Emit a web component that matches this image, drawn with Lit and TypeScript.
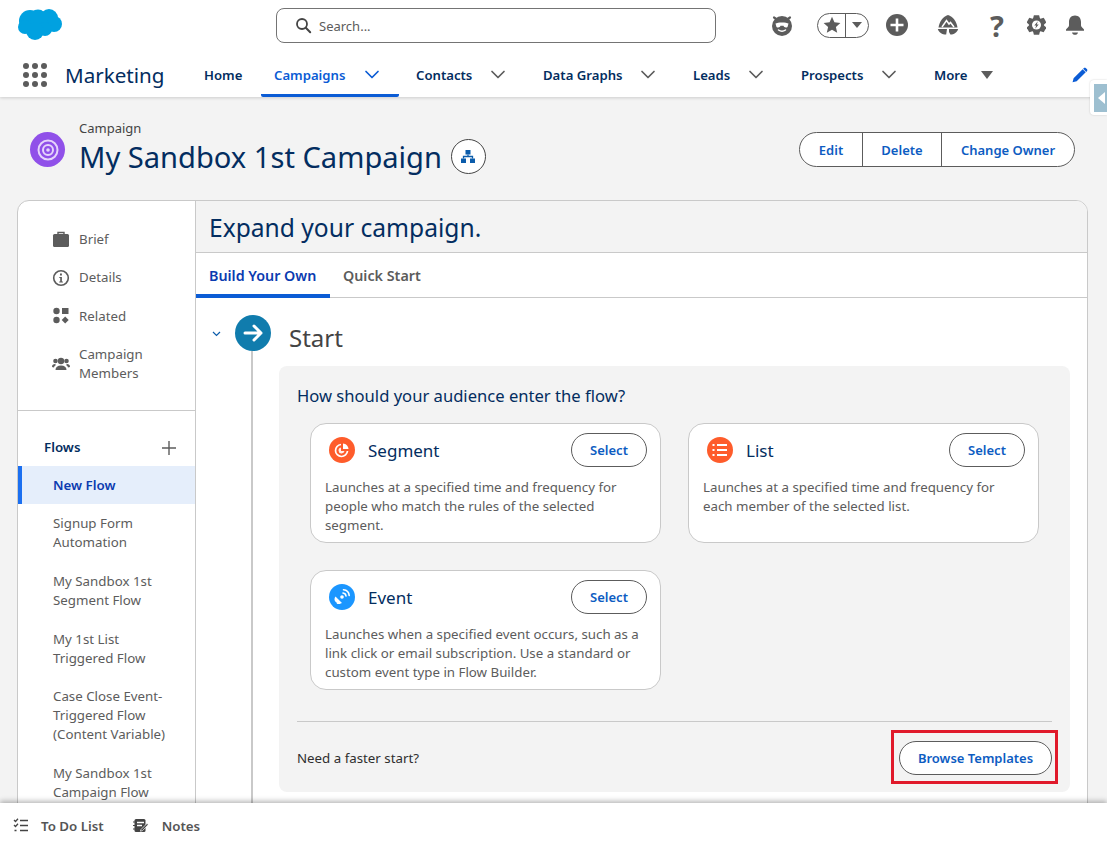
import { LitElement, html, css, svg } from "lit";
import { customElement } from "lit/decorators.js";

const chevron = (color: string) => html`<svg class="chev" width="16" height="10" viewBox="0 0 16 10"><path d="M2 1.500l6 6 6-6" fill="none" stroke=${color} stroke-width="1.700" stroke-linecap="round" stroke-linejoin="round"/></svg>`;

const icons = {
  cloud: svg`<g fill="#00a1e0"><circle cx="30" cy="21" r="11"/><circle cx="38" cy="18" r="8.500"/><circle cx="49" cy="18" r="9"/><circle cx="54" cy="24" r="8"/><circle cx="45" cy="29" r="7"/><circle cx="35" cy="31" r="9"/><circle cx="25" cy="27" r="7"/></g>`,
  search: svg`<circle cx="7" cy="7" r="5" fill="none" stroke="#444" stroke-width="1.800"/><path d="M10.800 10.800l4.400 4.400" stroke="#444" stroke-width="2" stroke-linecap="round"/>`,
  einstein: svg`<circle cx="11" cy="12" r="10" fill="#5c5c5c"/><path d="M3 3.500l3 2M19 3.500l-3 2" stroke="#5c5c5c" stroke-width="2.200" stroke-linecap="round"/><path d="M4.500 9.500c2-1.500 11-1.500 13 0l-1 3.500c-1.500 1-3.500.5-4-1.200h-3c-.5 1.700-2.500 2.200-4 1.200z" fill="#fff"/><path d="M7.500 16c2 1.500 5 1.500 7 0" stroke="#fff" stroke-width="1.500" fill="none" stroke-linecap="round"/>`,
  star: svg`<path d="M9 .8l2.400 5.500 6 .6-4.500 4 1.300 5.900L9 13.700 3.800 16.800l1.300-5.900-4.500-4 6-.6z" fill="#5c5c5c"/>`,
  plus: svg`<circle cx="11" cy="11" r="11" fill="#5c5c5c"/><path d="M11 4.500v13M4.500 11h13" stroke="#fff" stroke-width="2.600"/>`,
  trail: svg`<path d="M11 0c5 1.500 8.500 6.500 9.500 12.500h-19C2.500 6.500 6 1.500 11 0z" fill="#5c5c5c"/><path d="M.8 14h9.200l-.8 5.500C5 19.500 1.800 17.500.8 14zM12 14h9.200c-1 3.500-4.200 5.500-7.800 5.500l-1.400-2.500z" fill="#5c5c5c"/><path d="M5 12l4.500-6.500L12 9l1.500-1.500L17 12" fill="none" stroke="#fff" stroke-width="1.500"/>`,
  gear: svg`<g fill="#5c5c5c" transform="translate(9.500 10)"><circle r="7.400"/>${[0, 60, 120, 180, 240, 300].map(
    (a) => svg`<path d="M-2.600-9.800h5.200l1 4h-7.200z" transform="rotate(${a})"/>`
  )}<circle r="4.500" fill="#fff"/><path d="M1.300-3.800L-2.200.6h1.900L-1.300 3.800 2.200-.6H.3z"/></g>`,
  bell: svg`<path d="M10 1.500c3.800 0 6 2.800 6 6.500v3.500c0 1.500 2 2.500 3 4v1.200H1v-1.200c1-1.500 3-2.500 3-4V8c0-3.700 2.200-6.500 6-6.500z" fill="#5c5c5c"/><path d="M7 18.500h6c-.3 1.500-1.500 2.300-3 2.300s-2.700-.8-3-2.300z" fill="#5c5c5c"/>`,
  pencil: svg`<path d="M11.300 2.300l3.300 3.300L5 15.200.6 16.300 1.700 12zM12.400 1.200c.7-.7 1.700-.7 2.400 0l1 1c.7.7.7 1.700 0 2.400l-.6.600-3.400-3.400z" fill="#0b5cd5"/>`,
  org: svg`<rect x="4.500" y="0" width="5" height="4.500" fill="#0b5cab"/><rect x="0" y="8.500" width="5" height="4.500" fill="#0b5cab"/><rect x="9" y="8.500" width="5" height="4.500" fill="#0b5cab"/><path d="M7 4.500v2M2.500 8.500v-2h9v2" fill="none" stroke="#0b5cab" stroke-width="1.300"/>`,
  brief: svg`<path d="M6 3V1.500h6V3" fill="none" stroke="#5c5c5c" stroke-width="1.400"/><rect x="1" y="3" width="16" height="13" rx="1.500" fill="#5c5c5c"/>`,
  info: svg`<circle cx="9" cy="9" r="7.300" fill="none" stroke="#5c5c5c" stroke-width="1.600"/><path d="M7.300 8h2.600v4.500h1v1H7.200v-1h1V9h-.9zM8 4.500h1.900v2H8z" fill="#5c5c5c"/>`,
  related: svg`<circle cx="4.500" cy="4" r="3.200" fill="#5c5c5c"/><rect x="10" y="1" width="6.500" height="6" fill="#5c5c5c"/><circle cx="4.500" cy="13" r="3.200" fill="#5c5c5c"/><path d="M13.200 9.500l3.500 3.500-3.500 3.500-3.500-3.500z" fill="#5c5c5c"/>`,
  members: svg`<g fill="#5c5c5c"><circle cx="9" cy="6" r="3.200"/><path d="M3.500 15c0-3 2-4.500 5.500-4.500s5.500 1.500 5.500 4.500z"/><circle cx="3.500" cy="6" r="2.300"/><circle cx="14.500" cy="6" r="2.300"/><path d="M0 12c0-2.200 1.200-3 3-3l1 1c-1 .6-1.800 1.500-2 2.500zM18 12c0-2.200-1.200-3-3-3l-1 1c1 .6 1.800 1.500 2 2.500z"/></g>`,
  arrow: svg`<path d="M4 12h16M13 5l7 7-7 7" fill="none" stroke="#fff" stroke-width="3" stroke-linecap="round" stroke-linejoin="round"/>`,
  segment: svg`<circle cx="13" cy="13" r="13" fill="#fe5c2b"/><path d="M14 6.500c3 .2 5.300 2.500 5.500 5.500H14z" fill="#fff"/><path d="M12 7.500a6 6 0 1 0 6.500 6.500" fill="none" stroke="#fff" stroke-width="1.700"/><path d="M12 10.500a3 3 0 1 0 3.500 3.500H12z" fill="#fff" opacity=".9"/>`,
  list: svg`<circle cx="13" cy="13" r="13" fill="#fe5c2b"/><path d="M10 8h10M10 13h10M10 18h10" stroke="#fff" stroke-width="2"/><path d="M5.500 8h2M5.500 13h2M5.500 18h2" stroke="#fff" stroke-width="2"/>`,
  event: svg`<circle cx="13" cy="13" r="13" fill="#1b96ff"/><path d="M6.500 12.500l6.500 6.500c-2.500 1-5 .5-6.500-1.200s-1.200-3.500 0-5.300z" fill="#fff"/><path d="M10 17l-2.500 3h4z" fill="#fff"/><circle cx="13" cy="13" r="1.800" fill="#fff"/><path d="M14 9c1.700.2 2.800 1.300 3 3M14.500 5.800c3.200.3 5.400 2.500 5.700 5.700" fill="none" stroke="#fff" stroke-width="1.600" stroke-linecap="round"/>`,
  todo: svg`<path d="M1 2l1.500 1.500L5 .8M1 7l1.500 1.500L5 5.800" fill="none" stroke="#444" stroke-width="1.300"/><path d="M7 2.500h8M7 7.500h8M7 12.500h8M1.500 12.500h2" stroke="#444" stroke-width="1.600"/>`,
  notes: svg`<rect x="1.500" y="1" width="11" height="13" rx="1.500" fill="#444"/><path d="M0 4h3M0 7.500h3M0 11h3" stroke="#444" stroke-width="1.200"/><path d="M4 4.500h7M4 7.500h5" stroke="#fff" stroke-width="1.300"/><path d="M8 11.500l6-6 1.200 1.200-5.800 6-2 .5z" fill="#444" stroke="#fff" stroke-width=".7"/>`,
};

const navItems = [
  { label: "Contacts", width: 127 },
  { label: "Data Graphs", width: 150 },
  { label: "Leads", width: 108 },
  { label: "Prospects", width: 133 },
];

const flows = [
  ["Signup Form", "Automation"],
  ["My Sandbox 1st", "Segment Flow"],
  ["My 1st List", "Triggered Flow"],
  ["Case Close Event-", "Triggered Flow", "(Content Variable)"],
  ["My Sandbox 1st", "Campaign Flow"],
];

const entries = [
  { icon: icons.segment, title: "Segment", text: "Launches at a specified time and frequency for people who match the rules of the selected segment." },
  { icon: icons.list, title: "List", text: "Launches at a specified time and frequency for each member of the selected list." },
  { icon: icons.event, title: "Event", text: "Launches when a specified event occurs, such as a link click or email subscription. Use a standard or custom event type in Flow Builder." },
];

@customElement("app-root")
export class AppRoot extends LitElement {
  static styles = css`
    :host {
      display: flex;
      flex-direction: column;
      height: 100vh;
      overflow: hidden;
      position: relative;
      background: #f3f3f3;
      color: #032d60;
      font-family: "Noto Sans", "Open Sans", sans-serif;
      font-size: 13.3px;
    }

    svg { display: block; flex: none; }

    /* header */
    .header {
      flex: none;
      height: 97px;
      background: #fff;
      box-shadow: 0 1px 3px rgba(0, 0, 0, 0.16);
      position: relative;
      z-index: 2;
    }
    .top {
      display: flex;
      align-items: center;
      height: 52px;
      padding-left: 18px;
    }
    .logo { margin-right: 214px; margin-top: -2px; }
    .search {
      box-sizing: border-box;
      width: 440px;
      height: 35px;
      border: 1px solid #747474;
      border-radius: 8px;
      display: flex;
      align-items: center;
      gap: 7px;
      padding-left: 18px;
      color: #5c5c5c;
      font-size: 13px;
      margin-right: 55px;
      margin-top: -1px;
    }
    .tools { display: flex; align-items: center; margin-top: -2px; }
    .pill {
      width: 52px;
      height: 25px;
      border: 1px solid #5c5c5c;
      border-radius: 13px;
      display: flex;
      align-items: center;
      margin: 0 17px 0 24px;
      box-sizing: border-box;
    }
    .pill .star { width: 28px; display: flex; justify-content: center; border-right: 1px solid #5c5c5c; height: 100%; align-items: center; box-sizing: border-box; padding-left: 1px; }
    .pill .caret { margin-left: 6px; }
    .caret {
      width: 0;
      height: 0;
      border-left: 5px solid transparent;
      border-right: 5px solid transparent;
      border-top: 6px solid #5c5c5c;
    }
    .trail { margin-left: 29px; }
    .help {
      width: 14px;
      margin: 0 23px 0 31px;
      font-size: 29px;
      font-weight: 700;
      line-height: 1;
      color: #5c5c5c;
      text-align: center;
    }
    .bell { margin-left: 19px; }

    .nav {
      display: flex;
      align-items: center;
      height: 45px;
      padding-left: 23px;
      font-weight: 600;
      font-size: 13.15px;
    }
    .waffle {
      display: grid;
      grid-template-columns: repeat(3, 6px);
      gap: 3px;
      margin-right: 18px;
    }
    .waffle i { width: 6px; height: 6px; border-radius: 50%; background: #5c5c5c; }
    .app { font-size: 20.6px; font-weight: 400; width: 139px; }
    .nav-item { display: flex; align-items: center; height: 100%; box-sizing: border-box; }
    .home { width: 57px; }
    .active {
      width: 138px;
      margin-right: 17px;
      padding-left: 13px;
      color: #0b5cd5;
      border-bottom: 3px solid #0b5cd5;
      border-radius: 0 0 2px 2px;
      padding-top: 3px;
    }
    .active .chev { margin-left: 19px; }
    .item .chev { margin-left: auto; margin-right: 37px; }
    .more { width: 138px; gap: 14px; }
    .more .caret { border-left-width: 6px; border-right-width: 6px; border-top-width: 8px; }

    .handle {
      position: absolute;
      top: 80px;
      right: 0;
      width: 17px;
      height: 35px;
      background: #fff;
      border-radius: 4px 0 0 4px;
      box-shadow: 0 0 2px rgba(0, 0, 0, 0.2);
      z-index: 3;
      display: flex;
      align-items: center;
      justify-content: flex-end;
    }
    .handle div {
      width: 13px;
      height: 28px;
      background: #9dbfd0;
      display: flex;
      align-items: center;
    }
    .handle i {
      width: 0;
      height: 0;
      border-top: 6px solid transparent;
      border-bottom: 6px solid transparent;
      border-right: 7px solid #fff;
      margin-left: 4px;
    }

    /* page body */
    .content { flex: 1; min-height: 0; overflow: hidden; }
    .title-row {
      height: 103px;
      display: flex;
      padding: 0 32px 0 30px;
      box-sizing: border-box;
      position: relative;
    }
    .badge {
      width: 35px;
      height: 35px;
      border-radius: 50%;
      background: #9050e9;
      display: flex;
      align-items: center;
      justify-content: center;
      margin-top: 35px;
      margin-right: 14px;
    }
    .heading { margin-top: 23px; }
    .eyebrow { font-size: 13px; line-height: 17.8px; color: #444; }
    .name { font-size: 29.1px; line-height: 39.8px; white-space: nowrap; }
    .org {
      width: 35px;
      height: 35px;
      border: 1px solid #444;
      border-radius: 50%;
      background: #fff;
      box-sizing: border-box;
      display: flex;
      align-items: center;
      justify-content: center;
      margin: 42px 0 0 9px;
    }
    .group {
      margin-left: auto;
      margin-top: 35px;
      height: 35px;
      display: flex;
      border: 1px solid #5c5c5c;
      border-radius: 18px;
      background: #fff;
      box-sizing: border-box;
      color: #0d5cc2;
      font-weight: 600;
      font-size: 13px;
      align-items: center;
      text-align: center;
    }
    .group span { line-height: 35px; height: 33px; border-left: 1px solid #5c5c5c; box-sizing: border-box; }
    .group span:first-child { border-left: 0; }
    .edit { width: 62px; }
    .delete { width: 79px; }
    .owner { width: 133px; }

    .card {
      margin: 0 19px 0 17px;
      height: 660px;
      background: #fff;
      border: 1px solid #c9c9c9;
      border-radius: 12px 12px 0 0;
      display: flex;
      overflow: hidden;
    }
    .side { width: 177px; flex: none; border-right: 1px solid #c9c9c9; color: #5c5c5c; line-height: 19px; }
    .side-top { height: 210px; padding-top: 29px; box-sizing: border-box; border-bottom: 1px solid #c9c9c9; }
    .side-link { display: flex; align-items: center; padding-left: 34px; gap: 9px; margin-bottom: 19.3px; }
    .side-link svg { width: 18px; height: 18px; }
    .flows-head {
      display: flex;
      justify-content: space-between;
      align-items: center;
      height: 55px;
      padding: 18px 19px 0 26px;
      box-sizing: border-box;
      font-weight: 600;
      color: #032d60;
    }
    .flow-new {
      height: 38px;
      line-height: 38px;
      background: #e5eefb;
      border-left: 4px solid #1b6ff0;
      padding-left: 31px;
      color: #0b3bb0;
      font-weight: 600;
      margin-bottom: 10px;
    }
    .flow { padding-left: 35px; margin-bottom: 19.75px; }

    .main { flex: 1; min-width: 0; display: flex; flex-direction: column; }
    .main-head {
      height: 52px;
      flex: none;
      background: #f3f3f3;
      border-bottom: 1px solid #c9c9c9;
      padding-left: 13px;
      font-size: 24.6px;
      line-height: 54px;
      box-sizing: border-box;
    }
    .tabs {
      height: 45px;
      box-sizing: border-box;
      flex: none;
      border-bottom: 1px solid #c9c9c9;
      display: flex;
      font-size: 14.3px;
      font-weight: 600;
      color: #5c5c5c;
    }
    .tab { display: flex; align-items: center; padding: 0 13px; height: 45px; box-sizing: border-box; }
    .tab.on { color: #0b3bb0; border-bottom: 4px solid #0b5cd5; padding-top: 4px; width: 134px; }

    .step { display: flex; padding: 17px 17px 0 16px; flex: 1; }
    .toggle { width: 23px; padding-top: 16px; flex: none; }
    .rail { width: 44px; flex: none; display: flex; flex-direction: column; }
    .circle {
      width: 36px;
      height: 36px;
      border-radius: 50%;
      background: #107cad;
      display: flex;
      align-items: center;
      justify-content: center;
    }
    .line { flex: 1; width: 2px; background: #c9c9c9; margin-left: 16px; }
    .body { flex: 1; min-width: 0; padding-bottom: 40px; }
    .start { font-size: 24px; line-height: 34px; margin: 6px 0 11px 10px; color: #444; }
    .panel {
      background: #f3f3f3;
      border-radius: 8px;
      padding: 18px 18px 1px;
    }
    .ask { font-size: 16.6px; line-height: 24px; margin-bottom: 15px; }
    .grid {
      display: grid;
      grid-template-columns: 351px 351px;
      gap: 27px;
      padding-left: 13px;
    }
    .entry {
      height: 120px;
      background: #fff;
      border: 1px solid #c9c9c9;
      border-radius: 16px;
      box-sizing: border-box;
      padding: 9px 13px 0 14px;
    }
    .entry-head { display: flex; align-items: center; height: 34px; padding-left: 4px; margin-bottom: 11px; }
    .entry-title { font-size: 17px; margin-left: 13px; }
    .select {
      margin-left: auto;
      width: 76px;
      height: 34px;
      box-sizing: border-box;
      border: 1px solid #5c5c5c;
      border-radius: 17px;
      text-align: center;
      line-height: 33px;
      color: #0d5cc2;
      font-weight: 600;
      font-size: 13px;
    }
    .entry p { margin: 0; line-height: 19px; color: #5c5c5c; }
    .more-row {
      margin-top: 31px;
      border-top: 1px solid #c9c9c9;
      height: 70px;
      display: flex;
      align-items: center;
      justify-content: space-between;
      padding-top: 3px;
      box-sizing: border-box;
      color: #2e2e2e;
      position: relative;
    }
    .browse {
      width: 153px;
      height: 34px;
      box-sizing: border-box;
      border: 1px solid #5c5c5c;
      border-radius: 17px;
      background: #fff;
      text-align: center;
      line-height: 32px;
      color: #0d5cc2;
      font-weight: 600;
      font-size: 13px;
    }
    .mark {
      position: absolute;
      right: -6px;
      top: 8px;
      width: 167px;
      height: 54px;
      box-sizing: border-box;
      border: 3px solid #e01a2b;
    }

    .footer {
      flex: none;
      height: 41px;
      background: #fff;
      box-shadow: 0 -2px 5px rgba(0, 0, 0, 0.28);
      position: relative;
      z-index: 2;
      display: flex;
      align-items: center;
      padding: 4px 0 0 13px;
      box-sizing: border-box;
      color: #555;
      font-weight: 600;
    }
    .foot-item { display: flex; align-items: center; gap: 12px; margin-right: 29px; }
    .foot-item + .foot-item { gap: 13px; }
  `;

  render() {
    return html`
      <div class="header">
        <div class="top">
          <svg class="logo" width="44" height="32" viewBox="18 9.500 44 31">${icons.cloud}</svg>
          <div class="search">
            <svg width="17" height="17" viewBox="0 0 17 17">${icons.search}</svg>
            Search...
          </div>
          <div class="tools">
            <svg width="22" height="23" viewBox="0 0 22 23">${icons.einstein}</svg>
            <div class="pill">
              <span class="star"><svg width="18" height="18" viewBox="0 0 18 18">${icons.star}</svg></span>
              <span class="caret"></span>
            </div>
            <svg width="22" height="22" viewBox="0 0 22 22">${icons.plus}</svg>
            <svg class="trail" width="22" height="20" viewBox="0 0 22 20">${icons.trail}</svg>
            <span class="help">?</span>
            <svg width="19" height="20" viewBox="0 0 19 20">${icons.gear}</svg>
            <svg class="bell" width="20" height="22" viewBox="0 0 20 22">${icons.bell}</svg>
          </div>
        </div>
        <div class="nav">
          <div class="waffle">${Array.from({ length: 9 }, () => html`<i></i>`)}</div>
          <div class="app">Marketing</div>
          <div class="nav-item home">Home</div>
          <div class="nav-item active">Campaigns ${chevron("#0b5cd5")}</div>
          ${navItems.map(
            (n) => html`<div class="nav-item item" style="width:${n.width}px">${n.label}${chevron("#5c5c5c")}</div>`
          )}
          <div class="nav-item more">More <span class="caret"></span></div>
          <svg width="16" height="16" viewBox="0 0 17 17">${icons.pencil}</svg>
        </div>
      </div>
      <div class="handle"><div><i></i></div></div>

      <div class="content">
        <div class="title-row">
          <div class="badge">
            <svg width="24" height="24" viewBox="0 0 24 24">
              <g fill="none" stroke="#e5d4fb" stroke-width="2"><circle cx="12" cy="12" r="9.500"/><circle cx="12" cy="12" r="5"/></g>
              <circle cx="12" cy="12" r="1.800" fill="#e5d4fb"/>
            </svg>
          </div>
          <div class="heading">
            <div class="eyebrow">Campaign</div>
            <div class="name">My Sandbox 1st Campaign</div>
          </div>
          <div class="org"><svg width="14" height="13" viewBox="0 0 14 13">${icons.org}</svg></div>
          <div class="group">
            <span class="edit">Edit</span><span class="delete">Delete</span><span class="owner">Change Owner</span>
          </div>
        </div>

        <div class="card">
          <div class="side">
            <div class="side-top">
              <div class="side-link"><svg viewBox="0 0 18 18">${icons.brief}</svg>Brief</div>
              <div class="side-link"><svg viewBox="0 0 18 18">${icons.info}</svg>Details</div>
              <div class="side-link"><svg viewBox="0 0 18 18">${icons.related}</svg>Related</div>
              <div class="side-link"><svg viewBox="0 0 18 18">${icons.members}</svg><span>Campaign<br />Members</span></div>
            </div>
            <div class="flows-head">
              Flows
              <svg width="14" height="14" viewBox="0 0 14 14"><path d="M7 0v14M0 7h14" stroke="#5c5c5c" stroke-width="1.400"/></svg>
            </div>
            <div class="flow-new">New Flow</div>
            ${flows.map((lines) => html`<div class="flow">${lines.map((l) => html`<div>${l}</div>`)}</div>`)}
          </div>

          <div class="main">
            <div class="main-head">Expand your campaign.</div>
            <div class="tabs">
              <div class="tab on">Build Your Own</div>
              <div class="tab">Quick Start</div>
            </div>
            <div class="step">
              <div class="toggle">
                <svg width="9" height="6" viewBox="0 0 9 6"><path d="M1 1l3.500 3.500L8 1" fill="none" stroke="#0b5cab" stroke-width="1.200"/></svg>
              </div>
              <div class="rail">
                <div class="circle"><svg width="24" height="24" viewBox="0 0 24 24">${icons.arrow}</svg></div>
                <div class="line"></div>
              </div>
              <div class="body">
                <div class="start">Start</div>
                <div class="panel">
                  <div class="ask">How should your audience enter the flow?</div>
                  <div class="grid">
                    ${entries.map(
                      (e) => html`
                        <div class="entry">
                          <div class="entry-head">
                            <svg width="26" height="26" viewBox="0 0 26 26">${e.icon}</svg>
                            <span class="entry-title">${e.title}</span>
                            <span class="select">Select</span>
                          </div>
                          <p>${e.text}</p>
                        </div>
                      `
                    )}
                  </div>
                  <div class="more-row">
                    Need a faster start?
                    <span class="browse">Browse Templates</span>
                    <div class="mark"></div>
                  </div>
                </div>
              </div>
            </div>
          </div>
        </div>
      </div>

      <div class="footer">
        <div class="foot-item"><svg width="16" height="15" viewBox="0 0 16 15">${icons.todo}</svg>To Do List</div>
        <div class="foot-item"><svg width="16" height="15" viewBox="0 0 16 15">${icons.notes}</svg>Notes</div>
      </div>
    `;
  }
}
